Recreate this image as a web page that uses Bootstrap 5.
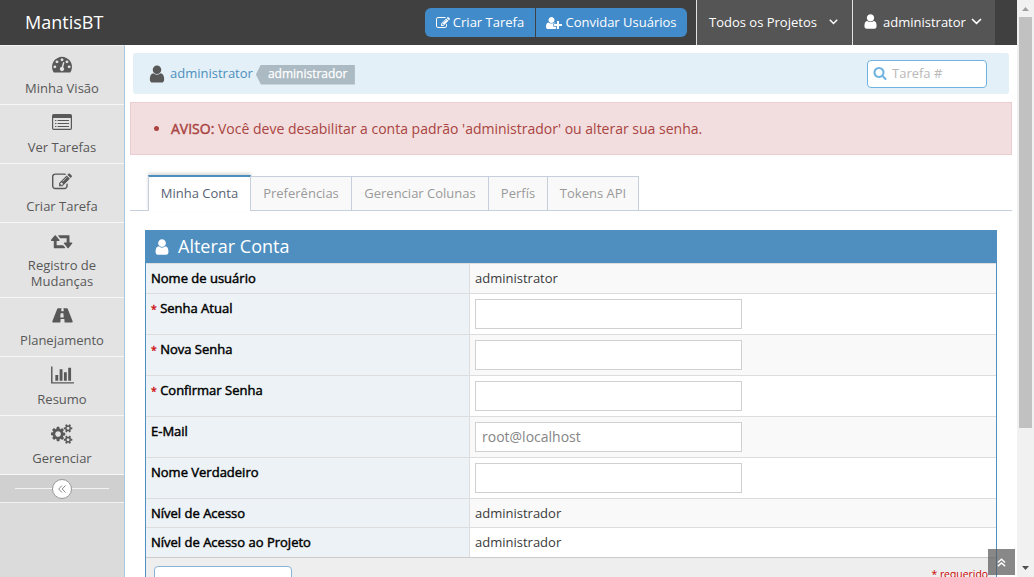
<!DOCTYPE html>
<html lang="pt-BR">
<head>
<meta charset="utf-8">
<title>MantisBT</title>
<link rel="stylesheet" href="https://cdn.jsdelivr.net/npm/bootstrap@5.3.0/dist/css/bootstrap.min.css">
<style>
html,body{height:100%;overflow:hidden}
body{font-family:"Open Sans",sans-serif;font-size:13px;line-height:20px;color:#393939;background:#fff}
svg{fill:currentColor;flex:none;display:block}
.page-view{height:577px;overflow:hidden}
.topbar{height:45px;background:#404040;color:#fff}
.topbar .navbar-brand{font-size:18px;color:#fff;margin-left:25px;line-height:45px}
.btn-group-top{gap:1px;margin-right:9px}
.btn-top{height:29px;background:#428bca;color:#fff;font-size:13px;line-height:27px;padding:0;border:0;border-radius:6px;gap:3px}
.btn-top:hover{background:#1b6aaa;color:#fff}
.b1{width:110px}.b2{width:151px}
.top-item{background:#555;border-left:1px solid #e1e1e1;height:45px;color:#fff;text-decoration:none;line-height:20px;padding-bottom:2px}
.p1{width:156px;padding-left:12px;padding-right:14px}.p2{width:143px;margin-right:22px;padding-left:9px}
.side{width:125px;background:#dbdbdb;border-right:1px solid #a7c9e0;border-top:1px solid #f3f3f3}
.side-link{height:59px;background:#e3e3e3;border-bottom:1px solid #f7f7f7;color:#585858;text-decoration:none;padding-top:8px;line-height:16px;text-align:center}
.side-link svg{margin:0 auto 6px}
.side-link.tall{height:75px}
.side-toggle{height:28px;background:#d0d0d0;border-bottom:1px solid #f3f3f3;padding:0 15px}
.side-toggle i{height:1px;background:#f3f3f3}
.round{width:20px;height:20px;border:1px solid #999;background:#fff;border-radius:50%;color:#888}
.crumbs{height:41px;margin:8px;background:#e4f0f7;border-radius:3px;padding:0 22px 0 14px}
.crumbs a{color:#4c8fbd;text-decoration:none;margin:0 3px;padding-bottom:2px}
.usericon{color:#585858}
.tagname{height:20px;width:99px;background:#abbac3;color:#fff;font-size:12px;line-height:18px;clip-path:polygon(5px 0,100% 0,100% 100%,5px 100%,0 50%);padding-left:12px;margin-top:2px;-webkit-text-stroke:.25px currentColor}
.find{width:120px;height:28px;border:1px solid #6fb3e0;border-radius:4px;background:#fff;color:#b9b9b9;padding:0 0 2px 5px}
.find svg{color:#6fb3e0;margin-right:5px}
.warn{height:53px;margin:0 5px;background:#f2dede;border:1px solid #ebccd1;color:#a94442;font-size:14px;padding-left:23px}
.dot{width:5px;height:5px;border-radius:50%;background:#a94442;margin-right:12px}
.faux{-webkit-text-stroke:.45px currentColor}
.tabs{height:36px;margin:20px 5px 0;padding-left:18px;border-bottom:1px solid #c5d0dc}
.tabs a{border:1px solid #c5d0dc;border-left:0;border-bottom:0;background:#f9f9f9;color:#999;text-decoration:none;text-align:center;margin-top:1px;line-height:33px;height:34px}
.tabs a.on{height:36px;margin-top:0;background:#fff;color:#576373;border-left:1px solid #c5d0dc;border-top:2px solid #4c8fbd;box-shadow:0 -2px 3px rgba(0,0,0,.15)}
.panel{width:852px;margin:19px 0 0 20px;border:1px solid #4f90c1;border-bottom:0}
.panel-top{height:32px;background:#4f8fc0;color:#fff;font-size:18px;line-height:28px;padding:0 0 2px 7px}
.panel-top svg{margin:2px 7px 0 0}
.frow{height:41px;border-top:1px solid #ddd;background:#fff}
.frow.s{height:30px}.frow.t{height:29px}
.frow:nth-child(even){background:#f9f9f9}
.lab{width:324px;background:#ecf2f5;border-right:1px solid #ddd;color:#000;padding:4px 5px}
em.star{color:#c00;font-style:normal;font-size:10.4px;-webkit-text-stroke:.3px currentColor}
.val{padding:4px 5px}
.fld{width:267px;height:30px;border:1px solid #d0d0d0;background:#fff;margin-top:1px;font-size:14px;line-height:28px;color:#858585;padding:0 6px}
.foot{height:60px;background:#eee;border-top:1px solid #ccc;padding:8px}
.savebtn{width:138px;height:34px;border:1px solid #8ab2d8;border-radius:4px;background:#fff}
.req{color:#c00;font-size:10.4px;margin-top:-2px}
.totop{position:absolute;right:2px;bottom:2px;width:27px;height:26px;background:rgba(85,85,85,.7);color:#fff}
.sbar{width:17px;background:#f1f1f1}
.sbar .thumb{width:13px;height:411px;background:#c1c1c1}
</style>
</head>
<body>
<svg width="0" height="0" class="position-absolute"><defs>
<path id="user" d="M1536 1399q0 109-62.5 187t-150.5 78h-854q-88 0-150.5-78t-62.5-187q0-85 8.5-160.5t31.5-152 58.5-131 94-89 134.5-34.5q131 128 313 128t313-128q76 0 134.5 34.5t94 89 58.5 131 31.5 152 8.5 160.5zm-256-887q0 159-112.5 271.5t-271.5 112.5-271.5-112.5-112.5-271.5 112.5-271.5 271.5-112.5 271.5 112.5 112.5 271.5z"/>
<path id="edit" d="M888 1184l116-116-152-152-116 116v56h96v96h56zm440-720q-16-16-33 1l-350 350q-17 17-1 33t33-1l350-350q17-17 1-33zm80 594v190q0 119-84.5 203.5t-203.5 84.5h-832q-119 0-203.5-84.5t-84.5-203.5v-832q0-119 84.5-203.5t203.5-84.5h832q63 0 117 25 15 7 18 23 3 17-9 29l-49 49q-14 14-32 8-23-6-45-6h-832q-66 0-113 47t-47 113v832q0 66 47 113t113 47h832q66 0 113-47t47-113v-126q0-13 9-22l64-64q15-15 35-7t20 29zm-96-738l288 288-672 672h-288v-288zm444 132l-92 92-288-288 92-92q28-28 68-28t68 28l152 152q28 28 28 68t-28 68z"/>
</defs></svg>
<div class="page-view d-flex">
<div class="flex-grow-1 d-flex flex-column position-relative">
  <nav class="topbar navbar p-0 flex-nowrap d-flex align-items-center flex-shrink-0">
    <a class="navbar-brand p-0 me-auto" href="#">MantisBT</a>
    <div class="btn-group-top d-flex">
      <a class="btn btn-top b1 rounded-end-0 d-flex align-items-center justify-content-center" href="#"><svg width="14" height="14" viewBox="0 0 1792 1792"><use href="#edit"/></svg><span>Criar Tarefa</span></a>
      <a class="btn btn-top b2 rounded-start-0 d-flex align-items-center justify-content-center" href="#"><svg width="16" height="14" viewBox="0 0 2048 1792"><path d="M704 896q-159 0-271.5-112.5t-112.5-271.5 112.5-271.5 271.5-112.5 271.5 112.5 112.5 271.5-112.5 271.5-271.5 112.5zm960 128h352q13 0 22.5 9.5t9.5 22.5v192q0 13-9.5 22.5t-22.5 9.5h-352v352q0 13-9.5 22.5t-22.5 9.5h-192q-13 0-22.5-9.5t-9.5-22.5v-352h-352q-13 0-22.5-9.5t-9.5-22.5v-192q0-13 9.5-22.5t22.5-9.5h352v-352q0-13 9.5-22.5t22.5-9.5h192q13 0 22.5 9.5t9.5 22.5v352zm-736 224q0 52 38 90t90 38h256v238q-68 50-171 50h-874q-121 0-194-69t-73-190q0-53 3.5-103.5t14-109 26.5-108.5 43-97.5 62-81 85.5-53.5 111.5-20q19 0 39 17 79 61 154.5 91.5t164.5 30.5 164.5-30.5 154.5-91.5q20-17 39-17 132 0 217 96h-223q-52 0-90 38t-38 90v192z"/></svg><span>Convidar Usuários</span></a>
    </div>
    <a class="top-item p1 d-flex align-items-center" href="#"><span class="me-auto">Todos os Projetos</span><svg width="9" height="6" viewBox="0 0 9 6"><path d="M.8.8 4.500 4.500 8.200.8" fill="none" stroke="currentColor" stroke-width="1.500"/></svg></a>
    <a class="top-item p2 d-flex align-items-center" href="#"><svg width="17" height="17" viewBox="0 0 1792 1792"><use href="#user"/></svg><span class="ms-1" style="margin-right:5px">administrator</span><svg width="11" height="7" viewBox="0 0 11 7"><path d="M1 1 5.500 5.400 10 1" fill="none" stroke="currentColor" stroke-width="1.600"/></svg></a>
  </nav>
  <div class="d-flex flex-grow-1 overflow-hidden">
    <aside class="side flex-shrink-0 d-flex flex-column">
      <a class="side-link" href="#"><svg width="20" height="20" viewBox="0 0 1792 1792"><path d="M384 1152q0-53-37.500-90.500t-90.500-37.500-90.500 37.500-37.500 90.500 37.500 90.500 90.500 37.500 90.500-37.500 37.500-90.500zm192-448q0-53-37.500-90.500t-90.500-37.500-90.500 37.500-37.500 90.500 37.500 90.500 90.500 37.500 90.500-37.500 37.500-90.500zm428 481l101-382q6-26-7.500-48.500t-38.500-29.500-48 6.500-30 39.500l-101 382q-60 5-107 43.500t-63 98.500q-20 77 20 146t117 89 146-20 89-117q16-60-6-117t-72-91zm660-33q0-53-37.500-90.500t-90.500-37.500-90.500 37.500-37.500 90.500 37.500 90.500 90.500 37.500 90.500-37.500 37.500-90.500zm-640-640q0-53-37.500-90.500t-90.500-37.500-90.500 37.500-37.500 90.500 37.500 90.500 90.500 37.500 90.500-37.500 37.500-90.500zm448 192q0-53-37.500-90.500t-90.500-37.500-90.500 37.500-37.500 90.500 37.500 90.500 90.500 37.500 90.500-37.500 37.500-90.500zm320 448q0 261-141 483-19 29-54 29h-1402q-35 0-54-29-141-221-141-483 0-182 71-348t191-286 286-191 348-71 348 71 286 191 191 286 71 348z"/></svg>Minha Visão</a>
      <a class="side-link" href="#"><svg width="20" height="20" viewBox="0 0 20 20"><path fill-rule="evenodd" d="M1.700 1h16.600q1.700 0 1.700 1.700v12.600q0 1.700-1.700 1.700H1.700Q0 17 0 15.300V2.700Q0 1 1.700 1zM1.200 5v10.400q0 .4.4.4h16.800q.4 0 .4-.4V5z"/><path d="M3 7h1.400v1H3zM5.600 7H17v1H5.600zM3 10h1.400v1H3zM5.600 10H17v1H5.600zM3 13h1.400v1H3zM5.600 13H17v1H5.600z"/></svg>Ver Tarefas</a>
      <a class="side-link" href="#"><svg width="20" height="20" viewBox="0 0 1792 1792"><use href="#edit"/></svg>Criar Tarefa</a>
      <a class="side-link tall" href="#"><svg width="22" height="20" viewBox="-32 0 1920 1792"><path d="M1216 1504q0 13-9.500 22.500t-22.500 9.500h-960q-8 0-13.500-2t-9-7-5.500-8-3-11.500-1-11.500v-600h-192q-26 0-45-19t-19-45q0-24 15-41l320-384q19-22 49-22t49 22l320 384q15 17 15 41 0 26-19 45t-45 19h-192v384h576q16 0 25 11l160 192q7 10 7 21zm640-416q0 24-15 41l-320 384q-20 23-49 23t-49-23l-320-384q-15-17-15-41 0-26 19-45t45-19h192v-384h-576q-16 0-25-12l-160-192q-7-9-7-20 0-13 9.500-22.500t22.500-9.500h960q8 0 13.500 2t9 7 5.500 8 3 11.500 1 11.500v600h192q26 0 45 19t19 45z"/></svg>Registro de<br>Mudanças</a>
      <a class="side-link" href="#"><svg width="22" height="20" viewBox="0 0 1920 1792"><path d="M1111 1001v-4l-24-320q-1-13-11-22.500t-23-9.500h-186q-13 0-23 9.500t-11 22.500l-24 320v4q-1 12 8 20t21 8h244q12 0 21-8t8-20zm803 410q0 73-46 73h-704q13 0 22-9.500t8-22.500l-20-256q-1-13-11-22.500t-23-9.500h-272q-13 0-23 9.500t-11 22.500l-20 256q-1 13 8 22.500t22 9.500h-704q-46 0-46-73 0-54 26-116l417-1044q8-19 26-33t38-14h339q-13 0-23 9.500t-11 22.500l-15 192q-1 14 8 23t22 9h166q13 0 22-9t8-23l-15-192q-1-13-11-22.500t-23-9.500h339q20 0 38 14t26 33l417 1044q26 62 26 116z"/></svg>Planejamento</a>
      <a class="side-link" href="#"><svg width="23" height="20" viewBox="0 0 2048 1792"><path d="M640 896v512h-256v-512h256zm384-512v1024h-256v-1024h256zm1024 1152v128h-2048v-1536h128v1408h1920zm-640-896v768h-256v-768h256zm384-384v1152h-256v-1152h256z"/></svg>Resumo</a>
      <a class="side-link" href="#"><svg width="22" height="20" viewBox="-32 0 1920 1792"><path d="M832 896q0-106-75-181t-181-75-181 75-75 181 75 181 181 75 181-75 75-181zm768 512q0-52-38-90t-90-38-90 38-38 90q0 53 37.500 90.500t90.500 37.500 90.500-37.500 37.500-90.500zm0-1024q0-52-38-90t-90-38-90 38-38 90q0 53 37.500 90.500t90.500 37.500 90.500-37.500 37.500-90.500zm-384 421v185q0 10-7 19.500t-16 10.500l-155 24q-11 35-32 76 34 48 90 115 7 11 7 20 0 12-7 19-23 30-82.500 89.500t-78.500 59.500q-11 0-21-7l-115-90q-37 19-77 31-11 108-23 155-7 24-30 24h-186q-11 0-20-7.500t-10-17.500l-23-153q-34-10-75-31l-118 89q-7 7-20 7-11 0-21-8-144-133-144-160 0-9 7-19 10-14 41-53t47-61q-23-44-35-82l-152-24q-10-1-17-9.500t-7-19.500v-185q0-10 7-19.500t16-10.500l155-24q11-35 32-76-34-48-90-115-7-11-7-20 0-12 7-20 22-30 82-89t79-59q11 0 21 7l115 90q34-18 77-32 11-108 23-154 7-24 30-24h186q11 0 20 7.500t10 17.500l23 153q34 10 75 31l118-89q8-7 20-7 11 0 21 8 144 133 144 160 0 8-7 19-12 16-42 54t-45 60q23 48 34 82l152 23q10 2 17 10.500t7 19.500zm640 533v140q0 16-149 31-12 27-30 52 51 113 51 138 0 4-4 7-122 71-124 71-8 0-46-47t-52-68q-20 2-30 2t-30-2q-14 21-52 68t-46 47q-2 0-124-71-4-3-4-7 0-25 51-138-18-25-30-52-149-15-149-31v-140q0-16 149-31 13-29 30-52-51-113-51-138 0-4 4-7 4-2 35-20t59-34 30-16q8 0 46 46.500t52 67.500q20-2 30-2t30 2q51-71 92-112l6-2q4 0 124 70 4 3 4 7 0 25-51 138 17 23 30 52 149 15 149 31zm0-1024v140q0 16-149 31-12 27-30 52 51 113 51 138 0 4-4 7-122 71-124 71-8 0-46-47t-52-68q-20 2-30 2t-30-2q-14 21-52 68t-46 47q-2 0-124-71-4-3-4-7 0-25 51-138-18-25-30-52-149-15-149-31v-140q0-16 149-31 13-29 30-52-51-113-51-138 0-4 4-7 4-2 35-20t59-34 30-16q8 0 46 46.500t52 67.500q20-2 30-2t30 2q51-71 92-112l6-2q4 0 124 70 4 3 4 7 0 25-51 138 17 23 30 52 149 15 149 31z"/></svg>Gerenciar</a>
      <div class="side-toggle d-flex align-items-center"><i class="flex-grow-1"></i><span class="round d-flex align-items-center justify-content-center"><svg width="8" height="8" viewBox="0 0 8 8" fill="none" stroke="currentColor"><path fill="none" d="M4 .5.700 4 4 7.500M7.500.5 4.200 4l3.300 3.500"/></svg></span><i class="flex-grow-1"></i></div>
    </aside>
    <main class="flex-grow-1">
      <div class="crumbs d-flex align-items-center">
        <svg class="usericon" width="20" height="20" viewBox="0 0 1792 1792"><use href="#user"/></svg>
        <a href="#">administrator</a><span class="tagname">administrador</span>
        <div class="find ms-auto d-flex align-items-center"><svg width="14" height="14" viewBox="0 0 1792 1792"><path d="M1216 832q0-185-131.500-316.500t-316.500-131.500-316.500 131.500-131.500 316.500 131.500 316.500 316.500 131.500 316.500-131.500 131.500-316.500zm512 832q0 52-38 90t-90 38q-54 0-90-38l-343-342q-179 124-399 124-143 0-273.500-55.500t-225-150-150-225-55.500-273.500 55.500-273.500 150-225 225-150 273.500-55.500 273.500 55.500 225 150 150 225 55.500 273.500q0 220-124 399l343 343q37 37 37 90z"/></svg><span>Tarefa #</span></div>
      </div>
      <div class="warn d-flex align-items-center"><span class="dot"></span><span><span class="faux">AVISO:</span> Você deve desabilitar a conta padrão 'administrador' ou alterar sua senha.</span></div>
      <div class="tabs d-flex">
        <a class="on" style="width:103px" href="#">Minha Conta</a><a style="width:101px" href="#">Preferências</a><a style="width:137px" href="#">Gerenciar Colunas</a><a style="width:59px" href="#">Perfís</a><a style="width:91px" href="#">Tokens API</a>
      </div>
      <section class="panel">
        <div class="panel-top d-flex align-items-center"><svg width="18" height="18" viewBox="0 0 1792 1792"><use href="#user"/></svg><span>Alterar Conta</span></div>
        <div class="frow s d-flex"><div class="lab"><span class="faux">Nome de usuário</span></div><div class="val">administrator</div></div>
        <div class="frow d-flex"><div class="lab"><em class="star">*</em> <span class="faux">Senha Atual</span></div><div class="val"><div class="fld"></div></div></div>
        <div class="frow d-flex"><div class="lab"><em class="star">*</em> <span class="faux">Nova Senha</span></div><div class="val"><div class="fld"></div></div></div>
        <div class="frow d-flex"><div class="lab"><em class="star">*</em> <span class="faux">Confirmar Senha</span></div><div class="val"><div class="fld"></div></div></div>
        <div class="frow d-flex"><div class="lab"><span class="faux">E-Mail</span></div><div class="val"><div class="fld">root@localhost</div></div></div>
        <div class="frow d-flex"><div class="lab"><span class="faux">Nome Verdadeiro</span></div><div class="val"><div class="fld"></div></div></div>
        <div class="frow t d-flex"><div class="lab"><span class="faux">Nível de Acesso</span></div><div class="val">administrador</div></div>
        <div class="frow s d-flex"><div class="lab"><span class="faux">Nível de Acesso ao Projeto</span></div><div class="val">administrador</div></div>
        <div class="foot d-flex justify-content-between"><span class="savebtn"></span><span class="req">* requerido</span></div>
      </section>
    </main>
  </div>
  <a class="totop d-flex align-items-center justify-content-center" href="#"><svg width="9" height="9" viewBox="0 0 10 10"><path fill="none" stroke="currentColor" stroke-width="1.600" d="M1 5l4-3.600L9 5M1 9l4-3.600L9 9"/></svg></a>
</div>
<div class="sbar d-flex flex-column align-items-center flex-shrink-0">
  <svg width="17" height="17" viewBox="0 0 17 17" style="color:#a0a0a0"><path d="M5 11h7L8.500 7z"/></svg>
  <div class="thumb"></div>
  <svg class="mt-auto" width="17" height="17" viewBox="0 0 17 17" style="color:#505050"><path d="M5 6h7L8.500 10z"/></svg>
</div>
</div>
<script src="https://cdn.jsdelivr.net/npm/bootstrap@5.3.0/dist/js/bootstrap.bundle.min.js"></script>
</body>
</html>
